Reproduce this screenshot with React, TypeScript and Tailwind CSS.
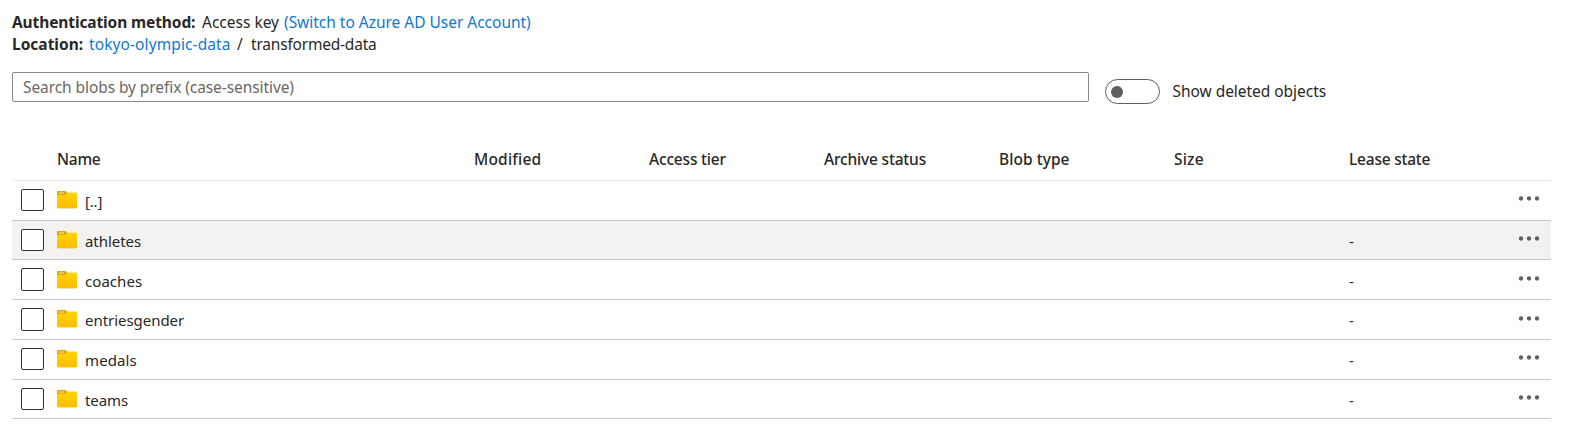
type Row = {
  name: string;
  tracking: string;
  lease?: string;
  hovered?: boolean;
  height: string;
  box: string;
  folder: string;
  label: string;
  dots: string;
};

const rows: Row[] = [
  { name: "[..]", tracking: "tracking-[-0.2px]", height: "h-10", box: "h-[22px]", folder: "mt-2.5", label: "mt-[9px]", dots: "mt-[15px]" },
  { name: "athletes", tracking: "tracking-[-0.05px]", lease: "-", hovered: true, height: "h-[39px]", box: "h-[22px]", folder: "mt-2.5", label: "mt-[9px]", dots: "mt-[15px]" },
  { name: "coaches", tracking: "tracking-[0.05px]", lease: "-", height: "h-10", box: "h-[23px]", folder: "mt-[11px]", label: "mt-2.5", dots: "mt-4" },
  { name: "entriesgender", tracking: "tracking-[-0.04px]", lease: "-", height: "h-10", box: "h-[23px]", folder: "mt-2.5", label: "mt-[9px]", dots: "mt-4" },
  { name: "medals", tracking: "tracking-[0.1px]", lease: "-", height: "h-10", box: "h-[22px]", folder: "mt-2.5", label: "mt-[9px]", dots: "mt-[15px]" },
  { name: "teams", tracking: "tracking-[-0.08px]", lease: "-", height: "h-[39px]", box: "h-[22px]", folder: "mt-2.5", label: "mt-[9px]", dots: "mt-[15px]" },
];

const headers = [
  { text: "Modified", style: "tracking-[0.2px]" },
  { text: "Access tier", style: "tracking-[-0.18px]" },
  { text: "Archive status", style: "tracking-[-0.18px]" },
  { text: "Blob type", style: "tracking-[0.05px]" },
  { text: "Size", style: "tracking-[0.2px]" },
  { text: "Lease state", style: "tracking-[-0.22px]" },
];

const columns = "grid grid-cols-[462px_175px_175px_175px_175px_175px_202px]";

function FolderIcon({ className }: { className: string }) {
  return (
    <svg className={className} width="20" height="18" viewBox="0 0 20 18">
      <defs>
        <linearGradient id="folder-face" x1="0" y1="0" x2="0" y2="1">
          <stop offset="0" stopColor="#ffd400" />
          <stop offset="1" stopColor="#ffbd00" />
        </linearGradient>
      </defs>
      <path d="M8 .8h11.400a.6.6 0 0 1 .6.6V4H8z" fill="#fbe7a8" />
      <path d="M.6 0h7.200c.5 0 .8.1 1.100.4L10.700 2 8.900 4.500H0V.6C0 .2.2 0 .6 0z" fill="#dfa80f" />
      <path d="M0 4h7.600c.500 0 .8-.1 1.100-.4L10.400 2H20v14.500a.6.6 0 0 1-.6.6H.6a.6.6 0 0 1-.6-.6z" fill="url(#folder-face)" />
      <path d="M2 1.500h5v1.100H2z" fill="#f8e3a0" />
      <path d="M.6 17h18.800v.7H.6z" fill="#eed48a" />
    </svg>
  );
}

function MoreIcon({ className }: { className: string }) {
  return (
    <svg className={className} width="21" height="5" viewBox="0 0 21 5" fill="#605e5c">
      <circle cx="2" cy="2.500" r="2.150" />
      <circle cx="10" cy="2.500" r="2.150" />
      <circle cx="18" cy="2.500" r="2.150" />
    </svg>
  );
}

export default function App() {
  return (
    <main className="h-[437px] w-[1576px] overflow-hidden bg-white pt-[11px] pl-3 font-['Noto_Sans',sans-serif] text-[15.5px] leading-[22px] whitespace-nowrap text-[#292827]">
      <div className="flex">
        <strong className="w-[190px] font-bold tracking-[-0.11px]">Authentication method:</strong>
        <span className="w-[82px]">Access key</span>
        <a className="tracking-[-0.02px] text-[#0f78d4]">(Switch to Azure AD User Account)</a>
      </div>
      <div className="flex">
        <strong className="w-[77px] font-bold">Location:</strong>
        <a className="w-[148px] tracking-[0.1px] text-[#0f78d4]">tokyo-olympic-data</a>
        <span className="w-3.5">/</span>
        <span className="tracking-[-0.2px]">transformed-data</span>
      </div>

      <div className="mt-[17px] flex">
        <input
          className="h-[30px] w-[1077px] rounded-[2px] border border-[#8a8886] pr-2 pl-2.5 tracking-[-0.08px] placeholder:text-[#6a6866] placeholder:opacity-100"
          placeholder="Search blobs by prefix (case-sensitive)"
        />
        <button className="mt-[7px] ml-4 flex h-[25px] w-[55px] items-center rounded-full border border-[#605e5c] pl-[5px]">
          <span className="size-3 rounded-full bg-[#605e5c]" />
        </button>
        <span className="mt-2 ml-[12.5px] tracking-[-0.04px]">Show deleted objects</span>
      </div>

      <section className="mt-[35px] w-[1539px]">
        <div className={`${columns} h-[42px] border-b border-[#e9e9e9] pt-[9px] font-medium`}>
          <span className="pl-[45px] tracking-[-0.25px]">Name</span>
          {headers.map((h) => (
            <span key={h.text} className={h.style}>{h.text}</span>
          ))}
        </div>
        {rows.map((r) => (
          <div key={r.name} className={`${columns} ${r.height} border-b border-[#c8c8c8] text-[15px] ${r.hovered ? "bg-[#f3f2f1]" : ""}`}>
            <div className="flex items-start pl-[9px]">
              <span className={`mt-2 w-[23px] rounded-[2px] border border-[#323130] bg-white ${r.box}`} />
              <FolderIcon className={`ml-[13px] ${r.folder}`} />
              <span className={`ml-2 ${r.label} ${r.tracking}`}>{r.name}</span>
            </div>
            <div className="col-start-7 flex items-start justify-between pr-[11px]">
              <span className={r.label}>{r.lease}</span>
              <MoreIcon className={r.dots} />
            </div>
          </div>
        ))}
      </section>
    </main>
  );
}
